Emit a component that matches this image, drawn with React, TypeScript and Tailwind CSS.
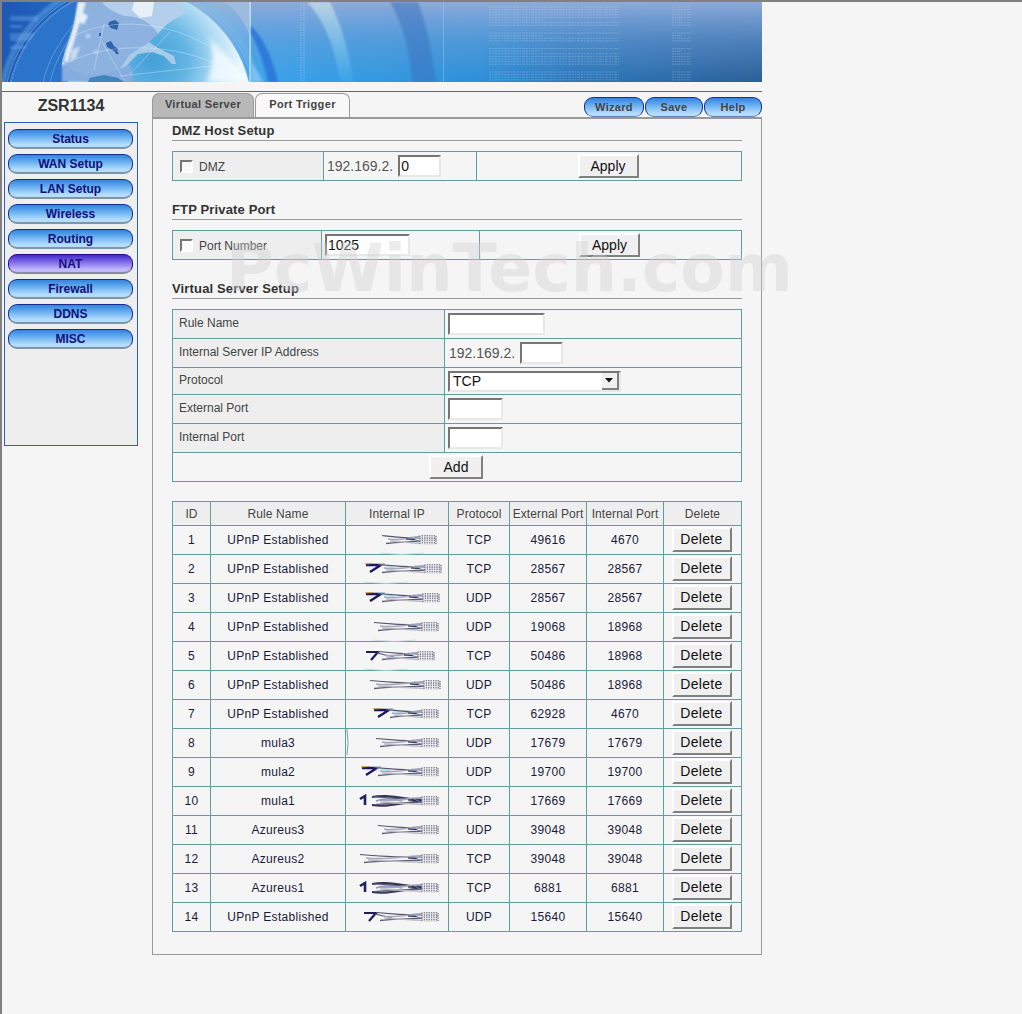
import React from "react";

const font = "font-['Liberation_Sans',Arial,sans-serif]";

function Banner() {
  const textRows: number[] = [];
  for (let y = 5; y < 80; y += 2.6) textRows.push(y);
  const isGap = (y: number) => (y > 24 && y < 29) || (y > 41 && y < 45) || (y > 64 && y < 70);
  return (
    <svg width="760" height="80" viewBox="0 0 760 80" className="block">
      <defs>
        <linearGradient id="h" x1="0" x2="1" y1="0" y2="0">
          <stop offset="0" stopColor="#3aa4ec" />
          <stop offset="0.45" stopColor="#2b90d8" />
          <stop offset="0.62" stopColor="#2a78bc" />
          <stop offset="1" stopColor="#2b5f97" />
        </linearGradient>
        <linearGradient id="v" x1="0" x2="0" y1="0" y2="1">
          <stop offset="0" stopColor="#8eaadb" stopOpacity="1" />
          <stop offset="0.5" stopColor="#6f9fd8" stopOpacity="0.5" />
          <stop offset="1" stopColor="#6f9fd8" stopOpacity="0" />
        </linearGradient>
        <linearGradient id="vl" x1="0" x2="1" y1="0" y2="0">
          <stop offset="0" stopColor="#1c58b4" />
          <stop offset="1" stopColor="#2a72cc" />
        </linearGradient>
        <linearGradient id="cr" x1="0" x2="0" y1="0" y2="1">
          <stop offset="0" stopColor="#93b4dc" />
          <stop offset="1" stopColor="#36a0ec" />
        </linearGradient>
        <radialGradient id="globe" gradientUnits="userSpaceOnUse" cx="150" cy="58" r="88">
          <stop offset="0" stopColor="#43a0d8" />
          <stop offset="0.4" stopColor="#62b4e4" />
          <stop offset="0.75" stopColor="#b0dcf4" />
          <stop offset="1" stopColor="#e8f6fc" />
        </radialGradient>
        <linearGradient id="arc1" x1="0" x2="0" y1="0" y2="1">
          <stop offset="0" stopColor="#c7dde6" />
          <stop offset="1" stopColor="#3ba4ea" />
        </linearGradient>
        <clipPath id="gc"><circle cx="128" cy="108" r="122" /></clipPath>
        <filter id="b1"><feGaussianBlur stdDeviation="0.9" /></filter>
        <filter id="b3"><feGaussianBlur stdDeviation="2.5" /></filter>
        <filter id="b2"><feGaussianBlur stdDeviation="0.4" /></filter>
      </defs>
      <rect x="247" width="513" height="80" fill="url(#h)" />
      <rect x="247" width="513" height="80" fill="url(#v)" />
      <rect width="248" height="80" fill="url(#cr)" />
      <rect width="120" height="80" fill="url(#vl)" />

      <g fill="#5f9ce0" opacity="0.5" filter="url(#b1)">
        <rect x="8" y="14" width="28" height="5" />
        <rect x="8" y="23" width="12" height="3" />
        <rect x="8" y="31" width="32" height="8" />
        <rect x="8" y="44" width="26" height="3" />
      </g>

      <g fill="none" stroke="#8cc4ee" opacity="0.75">
        <circle cx="128" cy="108" r="130" stroke="#7cbcec" strokeWidth="6" opacity="0.5" filter="url(#b1)" />
        <circle cx="128" cy="108" r="126" strokeWidth="0.7" />
        <circle cx="128" cy="108" r="123" strokeWidth="0.7" />
      </g>

      <circle cx="128" cy="108" r="122" fill="url(#globe)" />
      <g clipPath="url(#gc)">
        {/* pacific */}
        <path d="M0 0 H78 L72 23 L68 37 L63 50 L60 62 L66 80 H0 Z" fill="#2b74cc" />
        <g fill="none" stroke="#86bcea" strokeWidth="0.7" opacity="0.7">
          <path d="M41 80 C48 52 66 22 100 -4" />
          <path d="M48 80 C54 56 66 36 80 22" />
        </g>
        {/* central america band */}
        <path d="M60 62 L128 62 L132 80 L60 80 Z" fill="#86ace0" filter="url(#b1)" />
        {/* north america */}
        <g filter="url(#b2)">
          <path d="M76 0 H160 L156 32 L147 40 L127 53 L118 67 L104 72 L82 73 L66 66 L60 58 L64 48 L68 36 L72 23 Z" fill="#8db2e0" />
          <path d="M100 0 H178 L184 12 C172 16 164 22 156 32 C150 22 140 14 122 14 C112 10 104 6 100 0 Z" fill="#b4cfec" />
          <path d="M132 0 H152 L150 14 L138 16 L130 8 Z" fill="#e6f0f8" />
          <path d="M147 40 L156 46 L172 54 L174 62 L170 62 L162 54 L150 50 L136 52 L124 64 L118 67 L127 53 Z" fill="#a8cbe8" />
          <path d="M86 80 L88 76 L102 73 L116 76 L122 80 Z" fill="#3f84bc" />
        </g>
        {/* coast & mottling */}
        <g filter="url(#b1)" fill="#e6eff7">
          <path d="M76 0 L84 0 L80 14 L76 26 L72 40 L68 52 L66 60 L62 60 L64 48 L68 36 L72 23 Z" />
          <path d="M70 48 L78 44 L74 56 L68 60 Z" opacity="0.7" />
          <path d="M76 8 L86 14 L82 22 L76 20 Z" />
          <circle cx="86" cy="34" r="2.2" opacity="0.6" />
          <circle cx="94" cy="50" r="2" opacity="0.5" />
        </g>
        {/* lakes */}
        <g fill="#2f62ac" filter="url(#b2)">
          <path d="M107 20 l6 -2 l4 3 l-2 7 l-6 -2 l-3 -3 Z" />
          <path d="M104 41 l5 -2 l3 5 l4 3 l-1 4 l-5 -3 l-5 -3 Z" />
          <path d="M97 31 l2 0 l0 3 l-2 0 Z" />
          <path d="M113 50 l3 0 l1 2 l-3 0 Z" />
        </g>
        {/* bright limb */}
        <path d="M205 80 C212 62 212 46 206 34 L250 80 Z" fill="#f4fbff" opacity="0.85" filter="url(#b3)" />
        {/* graticule */}
        <g fill="none" stroke="#eaf4fb" strokeWidth="0.5" opacity="0.7">
          <path d="M72 34 C110 14 170 20 210 46" />
          <path d="M66 60 C110 40 170 40 224 66" />
          <path d="M102 22 L92 68" />
          <path d="M100 40 L122 78" />
          <path d="M118 74 L228 62" />
          <path d="M128 72 L168 30" />
        </g>
      </g>

      <rect x="247.5" width="1.2" height="80" fill="#d8f0fb" />
      <path d="M222 0 C232 6 242 18 247 32 L247 0 Z" fill="#a4bedf" opacity="0.75" />
      <path d="M249 24 C264 38 272 62 276 80 L266 80 C262 62 256 44 249 32 Z" fill="#2a74d8" opacity="0.85" filter="url(#b1)" />
      <path d="M249 60 C254 66 258 74 262 80 L249 80 Z" fill="#84c6f4" opacity="0.8" filter="url(#b1)" />
      <g stroke="#a8d6f4" strokeWidth="0.7" strokeDasharray="1.5 1" opacity="0.8">
        <line x1="299" y1="0" x2="299" y2="80" />
        <line x1="302" y1="0" x2="302" y2="80" />
      </g>
      <path d="M305 0 L328 0 C340 24 348 54 351 80 L338 80 C334 50 324 20 305 0 Z" fill="url(#arc1)" opacity="0.8" filter="url(#b1)" />
      <path d="M388 0 L416 0 C424 20 430 50 434 80 L410 80 C408 50 402 24 388 0 Z" fill="#3a6fbd" opacity="0.5" filter="url(#b1)" />
      <rect x="441" width="1" height="80" fill="#a8cff0" opacity="0.4" />

      <g stroke="#e8f2fb" strokeWidth="0.6" opacity="0.36" strokeDasharray="2.2 0.8 1.4 1 3 0.8">
        {textRows.map((y, i) =>
          isGap(y) ? null : (
            <g key={i}>
              <line x1="487" x2={i % 6 === 5 ? 540 : 617} y1={y} y2={y} />
              <line x1="670" x2={i % 6 === 5 ? 680 : 689} y1={y} y2={y} />
            </g>
          )
        )}
      </g>
    </svg>
  );
}

const NAV = ["Status", "WAN Setup", "LAN Setup", "Wireless", "Routing", "NAT", "Firewall", "DDNS", "MISC"];

function Nav({ label }: { label: string }) {
  const active = label === "NAT";
  return (
    <div
      className={
        active
          ? "w-[125px] h-[20px] rounded-[9px] border-t border-x border-[#2a0a8a] border-b-2 border-b-[#8a8aa8] flex items-center justify-center text-[12px] font-bold text-[#16127a] bg-[linear-gradient(#4428cc,#8472ea_45%,#c0b8fa_85%)]"
          : "w-[125px] h-[20px] rounded-[9px] border-t border-x border-[#14308c] border-b-2 border-b-[#7f96a6] flex items-center justify-center text-[12px] font-bold text-[#10107a] bg-[linear-gradient(#3284de,#70b4f2_45%,#b4dcfc_85%)]"
      }
    >
      {label}
    </div>
  );
}

function TopBtn({ label, w }: { label: string; w: string }) {
  return (
    <div
      className={`${w} h-[20px] rounded-[9px] border-t border-x border-[#14308c] border-b border-b-[#5f86b0] flex items-center justify-center text-[11px] font-bold tracking-[0.3px] text-[#444] bg-[linear-gradient(#3284de,#70b4f2_45%,#b4dcfc_85%)]`}
    >
      {label}
    </div>
  );
}

function Btn({ label, w, h = "h-[24px]" }: { label: string; w: string; h?: string }) {
  return (
    <button
      type="button"
      className={`${w} ${h} -ml-[2px] inline-flex items-center justify-center align-middle bg-[#f0f0f0] border-2 border-t-white border-l-white border-r-[#808080] border-b-[#808080] text-[14px] text-[#111]`}
    >
      {label}
    </button>
  );
}

function Input({ w, value }: { w: string; value?: string }) {
  return (
    <input
      readOnly
      value={value ?? ""}
      className={`${w} h-[22px] bg-white border-2 border-t-[#757575] border-l-[#757575] border-r-[#e8e8e8] border-b-[#e8e8e8] px-[1px] text-[14px] text-[#111] outline-none`}
    />
  );
}

function Check() {
  return <span className="inline-block w-[13px] h-[13px] bg-[#f8f8f8] border-2 border-t-[#757575] border-l-[#757575] border-r-white border-b-white" />;
}

function Heading({ children, h }: { children: React.ReactNode; h: string }) {
  return (
    <div className={`${h} border-b border-[#999] flex items-end pb-[1px] text-[13px] font-bold tracking-[0.15px] text-[#333] leading-[16px]`}>
      {children}
    </div>
  );
}

const td = "border border-[#5f9ea0]";

type Head = "none" | "seven" | "one" | "chev";
type Wave = "" | "b" | "l";
type Row = [number, string, number, number, Head, string, string, string, Wave];

const ROWS: Row[] = [
  [1, "UPnP Established", 36, 90, "none", "TCP", "49616", "4670", "b"],
  [2, "UPnP Established", 20, 95, "chev", "TCP", "28567", "28567", "b"],
  [3, "UPnP Established", 20, 93, "chev", "UDP", "28567", "28567", ""],
  [4, "UPnP Established", 28, 92, "none", "UDP", "19068", "18968", "b"],
  [5, "UPnP Established", 20, 88, "seven", "TCP", "50486", "18968", "b"],
  [6, "UPnP Established", 24, 94, "none", "UDP", "50486", "18968", ""],
  [7, "UPnP Established", 28, 92, "chev", "TCP", "62928", "4670", ""],
  [8, "mula3", 30, 92, "none", "UDP", "17679", "17679", "l"],
  [9, "mula2", 16, 92, "chev", "UDP", "19700", "19700", ""],
  [10, "mula1", 14, 92, "one", "TCP", "17669", "17669", ""],
  [11, "Azureus3", 32, 92, "none", "UDP", "39048", "39048", ""],
  [12, "Azureus2", 14, 92, "none", "TCP", "39048", "39048", ""],
  [13, "Azureus1", 14, 92, "one", "TCP", "6881", "6881", ""],
  [14, "UPnP Established", 18, 92, "seven", "UDP", "15640", "15640", ""],
];

function Smudge({ s, e, head, wave }: { s: number; e: number; head: Head; wave: Wave }) {
  const m = e - 16;
  const hs = head === "none" ? s : s + 12;
  return (
    <svg width="103" height="16" viewBox="0 0 103 16" className="block overflow-visible">
      <defs>
        <filter id="sm" x="-10%" y="-30%" width="120%" height="160%"><feGaussianBlur stdDeviation="0.45" /></filter>
      </defs>
      {wave === "b" && <path d={`M${s - 2} 21 Q${s + 20} 24 ${s + 42} 21`} fill="none" stroke="#bcdcdc" strokeWidth="0.8" />}
      {wave === "l" && <path d="M1 -6 Q3 8 1 20" fill="none" stroke="#5f9ea0" strokeWidth="0.9" />}
      <g filter="url(#sm)" fill="none">
        {head === "chev" && (
          <g>
            <path d={`M${s} 4 L${s + 15} 4 L${s + 4} 11`} stroke="#1e1660" strokeWidth="2.4" />
            <path d={`M${s + 14} 3 L${s + 28} 7`} stroke="#8fe8f0" strokeWidth="2" opacity="0.8" />
            <path d={`M${s - 1} 3 L${s + 7} 2.5`} stroke="#d89030" strokeWidth="0.9" />
          </g>
        )}
        {head === "seven" && (
          <g>
            <path d={`M${s} 4 L${s + 12} 4 L${s + 5} 12`} stroke="#201a58" strokeWidth="2.2" />
            <path d={`M${s + 11} 5 L${s + 28} 9`} stroke="#55556e" strokeWidth="1.2" />
          </g>
        )}
        {head === "one" && (
          <g>
            <path d={`M${s} 6 L${s + 5} 3 L${s + 5} 12`} stroke="#22225c" strokeWidth="2.6" />
            <path d={`M${s + 12} 4 C${s + 26} 1 ${s + 38} 5 ${m} 7 M${s + 12} 12 C${s + 26} 14 ${s + 38} 11 ${m} 8`} stroke="#35355a" strokeWidth="2" />
            <path d={`M${s + 16} 8 C${s + 24} 5 ${s + 34} 6 ${s + 42} 8`} stroke="#7c94d0" strokeWidth="1.6" />
          </g>
        )}
        <path d={`M${hs} 3.5 C${hs + 14} 5 ${m - 16} 6 ${m} 6`} stroke="#55556c" strokeWidth="1.2" />
        <path d={`M${hs + 4} 11.5 C${hs + 16} 10 ${m - 14} 10 ${m} 9`} stroke="#5c5c74" strokeWidth="1.3" />
        <path d={`M${hs + 6} 7 C${hs + 20} 9.5 ${m - 12} 5 ${m} 4.5`} stroke="#a8a8ba" strokeWidth="1.6" />
        <path d={`M${hs + 8} 9 L${m} 11.5`} stroke="#bcbcc8" strokeWidth="1.6" />
        <path d={`M${m - 14} 7 L${m - 5} 7.5`} stroke="#14142e" strokeWidth="1.2" />
        <path d={`M${m - 10} 5 L${m - 2} 9`} stroke="#7088c8" strokeWidth="0.9" />
        <path
          d={`M${m} 3.5 V12.5 M${m + 2.4} 3 V12.5 M${m + 4.8} 3 V12.5 M${m + 7.2} 3 V12.5 M${m + 9.6} 3 V12.5 M${m + 12} 3 V12.5 M${m + 14.4} 3 V12.5 M${m + 16} 4 V12`}
          stroke="#85859a"
          strokeWidth="1.4"
          strokeDasharray="1.6 0.7"
        />
      </g>
    </svg>
  );
}

function PlainRow({ label, children, h, pl = "pl-[3px]" }: { label: string; children: React.ReactNode; h: string; pl?: string }) {
  return (
    <tr className={h}>
      <td className={`${td} bg-[#eeeeee] pl-[6px] pb-[2px] text-[#444] text-[12px]`}>{label}</td>
      <td className={`${td} ${pl}`}>{children}</td>
    </tr>
  );
}

export default function App() {
  return (
    <div className={`${font} relative w-[1022px] h-[1014px] overflow-hidden bg-[#f5f5f5] border-t-2 border-l-2 border-[#808080]`}>
      <Banner />
      <div className="w-[760px] mt-[9px] border-t border-[#666]" />

      <div className="w-[760px] flex">
        <div className="w-[150px] shrink-0 pl-[2px]">
          <div className="w-[134px] h-[28px] flex items-center justify-center text-[16px] font-bold text-[#333]">ZSR1134</div>
          <div className="mt-[2px] w-[134px] h-[324px] bg-[#eeeeee] border border-[#2f5fb0] pt-[6px] pl-[3px] flex flex-col gap-[5px]">
            {NAV.map((n) => (
              <Nav key={n} label={n} />
            ))}
          </div>
        </div>

        <div className="w-[610px]">
          <div className="h-[25px] flex items-end">
            <div className="w-[102px] h-[24px] pb-[2px] rounded-t-[7px] border-t border-x border-[#999] bg-[#b8b8b8] flex items-center justify-center text-[11px] font-bold tracking-[0.35px] text-[#444]">
              Virtual Server
            </div>
            <div className="ml-[1px] w-[95px] h-[24px] pb-[2px] rounded-t-[7px] border-t border-x border-[#999] bg-[#f8f8f8] flex items-center justify-center text-[11px] font-bold tracking-[0.35px] text-[#444]">
              Port Trigger
            </div>
            <div className="ml-auto flex gap-[1px]">
              <TopBtn label="Wizard" w="w-[60px]" />
              <TopBtn label="Save" w="w-[58px]" />
              <TopBtn label="Help" w="w-[58px]" />
            </div>
          </div>

          <div className="h-[838px] border border-t-2 border-[#999] px-[19px]">
            <Heading h="h-[22px]">DMZ Host Setup</Heading>
            <table className="mt-[10px] w-[570px] table-fixed border-collapse">
              <colgroup>
                <col className="w-[151px]" />
                <col className="w-[153px]" />
                <col />
              </colgroup>
              <tbody>
                <tr className="h-[29px]">
                  <td className={`${td} bg-[#eeeeee] pl-[7px] text-[12px] text-[#444]`}>
                    <span className="flex items-center gap-[6px]"><Check /><span className="mt-[2px]">DMZ</span></span>
                  </td>
                  <td className={`${td} pl-[3px]`}>
                    <span className="flex items-center gap-[5px] text-[14px] text-[#555]">192.169.2. <Input w="w-[43px]" value="0" /></span>
                  </td>
                  <td className={`${td} text-center`}><Btn label="Apply" w="w-[61px]" /></td>
                </tr>
              </tbody>
            </table>

            <Heading h="h-[39px]">FTP Private Port</Heading>
            <table className="mt-[10px] w-[570px] table-fixed border-collapse">
              <colgroup>
                <col className="w-[149px]" />
                <col className="w-[158px]" />
                <col />
              </colgroup>
              <tbody>
                <tr className="h-[29px]">
                  <td className={`${td} bg-[#eeeeee] pl-[7px] text-[12px] text-[#444]`}>
                    <span className="flex items-center gap-[6px]"><Check /><span className="mt-[2px]">Port Number</span></span>
                  </td>
                  <td className={`${td} pl-[3px]`}><Input w="w-[85px]" value="1025" /></td>
                  <td className={`${td} text-center`}><Btn label="Apply" w="w-[61px]" /></td>
                </tr>
              </tbody>
            </table>

            <Heading h="h-[39px]">Virtual Server Setup</Heading>
            <table className="mt-[10px] w-[570px] table-fixed border-collapse">
              <colgroup>
                <col className="w-[272px]" />
                <col />
              </colgroup>
              <tbody>
                <PlainRow label="Rule Name" h="h-[29px]"><Input w="w-[97px]" /></PlainRow>
                <PlainRow label="Internal Server IP Address" h="h-[29px]" pl="pl-[4px]">
                  <span className="flex items-center gap-[5px] text-[14px] text-[#555]">192.169.2. <Input w="w-[43px]" /></span>
                </PlainRow>
                <PlainRow label="Protocol" h="h-[27px]">
                  <div className="w-[173px] h-[21px] bg-white border-2 border-t-[#757575] border-l-[#757575] border-r-[#e8e8e8] border-b-[#e8e8e8] flex items-center justify-between">
                    <span className="pl-[3px] text-[14px] text-[#111]">TCP</span>
                    <span className="w-[17px] h-[17px] bg-[#f0f0f0] border-r-2 border-b-2 border-[#808080] flex items-center justify-center">
                      <svg width="9" height="5" viewBox="0 0 9 5"><path d="M0 0 H8 L4 4.5 Z" fill="#111" /></svg>
                    </span>
                  </div>
                </PlainRow>
                <PlainRow label="External Port" h="h-[29px]"><Input w="w-[55px]" /></PlainRow>
                <PlainRow label="Internal Port" h="h-[29px]"><Input w="w-[55px]" /></PlainRow>
                <tr className="h-[29px]">
                  <td colSpan={2} className={`${td} text-center`}><Btn label="Add" w="w-[54px]" /></td>
                </tr>
              </tbody>
            </table>

            <table className="mt-[19px] w-[570px] table-fixed border-collapse text-[12px] text-[#1a1a3a] text-center">
              <colgroup>
                <col className="w-[38px]" />
                <col className="w-[135px]" />
                <col className="w-[103px]" />
                <col className="w-[61px]" />
                <col className="w-[77px]" />
                <col className="w-[77px]" />
                <col />
              </colgroup>
              <thead>
                <tr className="h-[24px] bg-[#eeeeee] text-[#444]">
                  {["ID", "Rule Name", "Internal IP", "Protocol", "External Port", "Internal Port", "Delete"].map((h) => (
                    <th key={h} className={`${td} font-normal tracking-[0.1px]`}>{h}</th>
                  ))}
                </tr>
              </thead>
              <tbody className="tracking-[0.3px]">
                {ROWS.map((r) => (
                  <tr key={r[0]} className="h-[29px]">
                    <td className={td}>{r[0]}</td>
                    <td className={td}>{r[1]}</td>
                    <td className={td}><Smudge s={r[2]} e={r[3]} head={r[4]} wave={r[8]} /></td>
                    <td className={td}>{r[5]}</td>
                    <td className={td}>{r[6]}</td>
                    <td className={td}>{r[7]}</td>
                    <td className={`${td} pb-[2px]`}><Btn label="Delete" w="w-[60px]" h="h-[25px]" /></td>
                  </tr>
                ))}
              </tbody>
            </table>
          </div>
        </div>
      </div>

      <div className="absolute left-[224px] top-[232px] pointer-events-none font-['DejaVu_Sans',sans-serif] text-[65px] leading-[70px] font-bold text-[#d0d0d0]/40 whitespace-nowrap">
        PcWinTech.com
      </div>
    </div>
  );
}
